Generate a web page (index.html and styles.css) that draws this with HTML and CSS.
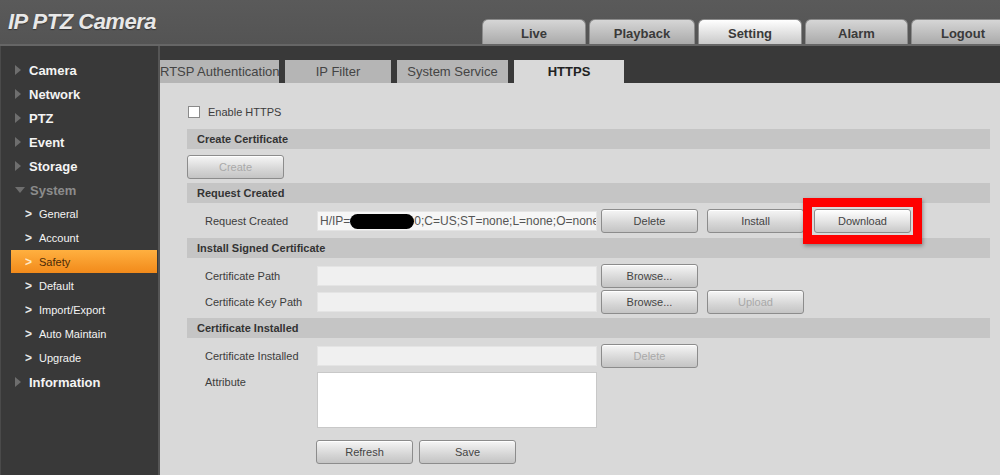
FILE: index.html
```html
<!DOCTYPE html>
<html>
<head>
<meta charset="utf-8">
<link rel="stylesheet" href="styles.css">
</head>
<body>
<div class="page">
  <header class="header">
    <div class="logo">IP PTZ Camera</div>
    <nav class="tabs">
      <div class="tab">Live</div>
      <div class="tab w106">Playback</div>
      <div class="tab active">Setting</div>
      <div class="tab w103">Alarm</div>
      <div class="tab">Logout</div>
    </nav>
  </header>
  <div class="main">
    <aside class="sidebar">
      <div class="item"><span class="tri"></span>Camera</div>
      <div class="item"><span class="tri"></span>Network</div>
      <div class="item"><span class="tri"></span>PTZ</div>
      <div class="item"><span class="tri"></span>Event</div>
      <div class="item"><span class="tri"></span>Storage</div>
      <div class="item open"><span class="tri down"></span>System</div>
      <div class="sub"><span class="chev">&gt;</span>General</div>
      <div class="sub"><span class="chev">&gt;</span>Account</div>
      <div class="sub selected"><span class="chev">&gt;</span>Safety</div>
      <div class="sub"><span class="chev">&gt;</span>Default</div>
      <div class="sub"><span class="chev">&gt;</span>Import/Export</div>
      <div class="sub"><span class="chev">&gt;</span>Auto Maintain</div>
      <div class="sub"><span class="chev">&gt;</span>Upgrade</div>
      <div class="item"><span class="tri"></span>Information</div>
    </aside>
    <section class="content">
      <div class="subtabs">
        <div class="subtab first">RTSP Authentication</div>
        <div class="subtab">IP Filter</div>
        <div class="subtab w111">System Service</div>
        <div class="subtab active">HTTPS</div>
      </div>
      <div class="panel">
        <div class="check-row"><span class="checkbox"></span>Enable HTTPS</div>
        <div class="bar">Create Certificate</div>
        <div class="btn-row"><button class="btn disabled">Create</button></div>
        <div class="bar mt4">Request Created</div>
        <div class="row mt6">
          <span class="label">Request Created</span>
          <span class="field req"><span class="req-text">H/IP=<span class="redact"></span>0;C=US;ST=none;L=none;O=none</span></span>
          <button class="btn first">Delete</button>
          <button class="btn next">Install</button>
          <span class="highlight"><button class="btn">Download</button></span>
        </div>
        <div class="bar mt5">Install Signed Certificate</div>
        <div class="row mt6">
          <span class="label">Certificate Path</span>
          <span class="field"></span>
          <button class="btn first">Browse...</button>
        </div>
        <div class="row mt2">
          <span class="label">Certificate Key Path</span>
          <span class="field"></span>
          <button class="btn first">Browse...</button>
          <button class="btn next disabled">Upload</button>
        </div>
        <div class="bar mt4">Certificate Installed</div>
        <div class="row mt6">
          <span class="label">Certificate Installed</span>
          <span class="field"></span>
          <button class="btn first disabled">Delete</button>
        </div>
        <div class="row top mt4">
          <span class="label attr">Attribute</span>
          <span class="textarea"></span>
        </div>
        <div class="actions">
          <button class="btn">Refresh</button>
          <button class="btn save">Save</button>
        </div>
      </div>
    </section>
  </div>
</div>
</body>
</html>
```
FILE: styles.css
```css
* { box-sizing: border-box; }
html, body { margin: 0; padding: 0; }
body {
  width: 1000px;
  height: 475px;
  overflow: hidden;
  font-family: "Liberation Sans", Arial, sans-serif;
  background: #d9d9d9;
}
.page { width: 1000px; height: 475px; display: flex; flex-direction: column; }

.header {
  height: 46px;
  background: linear-gradient(#5a5a5a, #545454);
  border-bottom: 2px solid #666;
  display: flex;
  align-items: flex-end;
  flex: none;
  overflow: hidden;
}
.logo {
  align-self: flex-start;
  margin: 9px 0 0 8px;
  font-size: 22px;
  font-weight: bold;
  font-style: italic;
  letter-spacing: -0.5px;
  color: #e8e8e8;
  text-shadow: 0 1px 1px #333;
  flex: none;
}
.tabs {
  margin-left: auto;
  margin-right: -15px;
  display: flex;
  gap: 3px;
  flex: none;
}
.tab {
  width: 104px;
  height: 25px;
  border-radius: 6px 6px 0 0;
  background: linear-gradient(#d6d6d6, #aaaaaa);
  border: 1px solid #8a8a8a;
  border-bottom: none;
  font-size: 13px;
  font-weight: bold;
  color: #3a3a3a;
  display: flex;
  align-items: center;
  justify-content: center;
  padding-top: 2px;
}
.tab.w106 { width: 106px; }
.tab.w103 { width: 103px; }
.tab.active { background: linear-gradient(#ffffff, #c9c9c9); }

.main { flex: 1; display: flex; min-height: 0; }
.sidebar {
  width: 160px;
  flex: none;
  background: #393939;
  border-left: 1px solid #4a4a4a;
  border-right: 2px solid #555;
  padding-top: 12px;
}
.item, .sub {
  height: 24px;
  display: flex;
  align-items: center;
  color: #f4f4f4;
}
.item {
  font-size: 13px;
  font-weight: bold;
  padding-left: 14px;
}
.item.open { color: #8c8c8c; }
.tri {
  width: 0; height: 0;
  border-top: 5px solid transparent;
  border-bottom: 5px solid transparent;
  border-left: 6px solid #6e6e6e;
  margin-right: 8px;
}
.tri.down {
  border-left: 5px solid transparent;
  border-right: 5px solid transparent;
  border-top: 6px solid #6e6e6e;
  border-bottom: 0;
  margin-right: 5px;
}
.sub {
  font-size: 11px;
  padding-left: 24px;
}
.chev {
  display: inline-block;
  font-weight: bold;
  font-size: 12px;
  width: 14px;
  color: #e8e8e8;
  transform: scaleY(1.1);
}
.sub.selected {
  margin-left: 10px;
  padding-left: 14px;
  margin-right: 1px;
  height: 23px;
  margin-bottom: 1px;
  background: linear-gradient(#ffb040, #f28a1a);
  color: #4a2a08;
}
.sub.selected .chev { color: #ffe7c4; }

.content { flex: 1; display: flex; flex-direction: column; min-width: 0; }
.subtabs {
  height: 37px;
  background: #393939;
  display: flex;
  align-items: flex-end;
  gap: 6px;
  flex: none;
}
.subtab {
  width: 106px;
  height: 23px;
  background: #b5b5b5;
  color: #444;
  font-size: 13px;
  display: flex;
  align-items: center;
  justify-content: center;
  white-space: nowrap;
  overflow: hidden;
}
.subtab.first { width: 119px; justify-content: flex-start; }
.subtab.w111 { width: 111px; }
.subtab.active {
  width: 110px;
  background: #d9d9d9;
  font-weight: bold;
  color: #222;
}

.panel {
  flex: 1;
  background: #d9d9d9;
  padding: 18px 10px 0 27px;
  font-size: 11px;
  color: #3c3c3c;
}
.check-row {
  height: 22px;
  display: flex;
  align-items: center;
  padding-left: 1px;
}
.checkbox {
  width: 12px; height: 12px;
  background: #fff;
  border: 1px solid #8a8a8a;
  margin-right: 8px;
}
.bar {
  margin-top: 6px;
  height: 20px;
  background: #c5c5c5;
  font-size: 11px;
  font-weight: bold;
  color: #333;
  display: flex;
  align-items: center;
  padding-left: 10px;
}
.mt2 { margin-top: 2px; }
.mt4 { margin-top: 4px; }
.mt5 { margin-top: 5px; }
.mt6 { margin-top: 6px; }
.btn-row { margin-top: 6px; height: 24px; display: flex; }

.btn {
  width: 97px;
  height: 24px;
  border: 1px solid #8c8c8c;
  border-radius: 3px;
  background: linear-gradient(#f6f6f6, #d6d6d6 60%, #c4c4c4);
  font-family: "Liberation Sans", Arial, sans-serif;
  font-size: 11px;
  color: #444;
  padding: 0;
  box-shadow: inset 0 1px 0 #fff;
}
.btn.disabled { color: #a9a9a9; }

.row {
  height: 24px;
  display: flex;
  align-items: center;
  padding-left: 18px;
}
.row.top { align-items: flex-start; height: auto; }
.label { width: 112px; flex: none; white-space: nowrap; }
.label.attr { padding-top: 4px; }
.field {
  width: 280px;
  height: 20px;
  flex: none;
  background: #f0f0f0;
  border: 1px solid #e4e4e4;
  overflow: hidden;
  display: flex;
  align-items: center;
}
.field.req {
  background: #f6f6f6;
  font-size: 12px;
  color: #555;
  padding-left: 2px;
}
.req-text {
  white-space: nowrap;
  display: flex;
  align-items: center;
  flex: none;
}
.redact {
  display: inline-block;
  width: 64px;
  height: 15px;
  background: #000;
  border-radius: 8px;
  flex: none;
}
.btn.first { margin-left: 4px; }
.btn.next { margin-left: 9px; }
.highlight {
  margin-left: 10px;
  display: inline-flex;
  box-shadow: 0 0 0 2px #d9d9d9, 0 0 0 11px #ff0000, 1px 2px 4px 11px rgba(0,0,0,0.35);
}
.highlight .btn { background: linear-gradient(#ffffff, #e0e0e0 60%, #c8c8c8); }
.textarea {
  width: 280px;
  height: 56px;
  background: #fff;
  border: 1px solid #c8c8c8;
}
.actions {
  margin-top: 12px;
  padding-left: 129px;
  display: flex;
  gap: 6px;
}
```
